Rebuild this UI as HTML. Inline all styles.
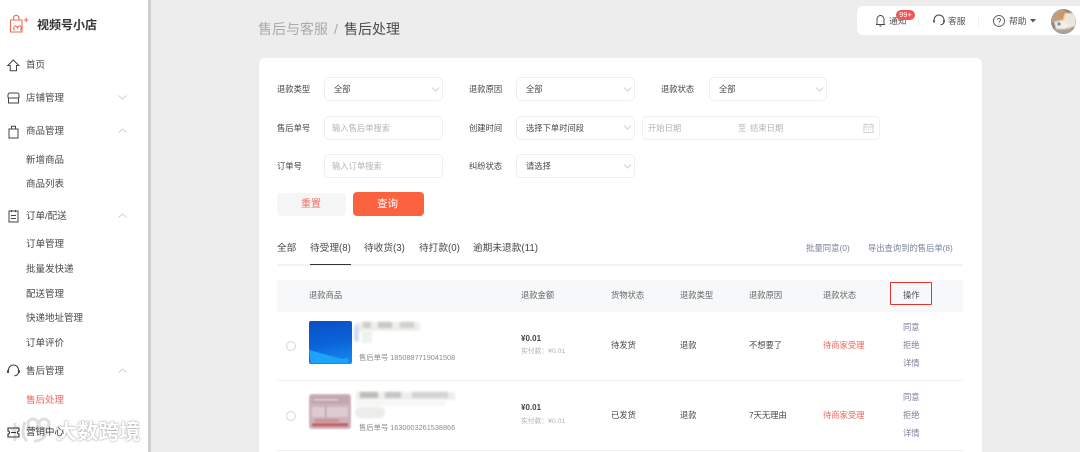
<!DOCTYPE html>
<html lang="zh-CN"><head><meta charset="utf-8"><title>售后处理</title>
<style>
*{box-sizing:border-box}
html,body{margin:0;padding:0;width:1080px;height:452px;overflow:hidden}
body{background:#ededed;font-family:"Liberation Sans","Noto Sans CJK SC",sans-serif;color:#333}
#w{position:absolute;left:0;top:0;width:1080px;height:452px;overflow:hidden;background:#ededed}
.t{position:absolute;white-space:nowrap;line-height:16px;height:16px;filter:blur(.3px)}
.b{position:absolute}
.s{position:absolute;background:#fff;border:1px solid #efefef;border-radius:5px;height:24px}
.chev{position:absolute;fill:none;stroke:#c4c4c4;stroke-width:.8}
.l{font-size:8.3px;color:#444}
.side{font-size:9.5px;color:#484848}
.v{font-size:8.3px;color:#484848}
.h{font-size:8.3px;color:#666}
.p{font-size:8.3px;color:#b5b5b5}
.a{font-size:8.3px;color:#7a8299}
.r{font-size:8.3px;color:#f0645a}
.tab{font-size:9.7px;color:#484848}
.top{font-size:8.8px;color:#555}
svg{position:absolute;overflow:visible}
</style></head><body><div id="w">

<div class="b" style="left:0;top:0;width:148px;height:452px;background:#fff"></div>
<div class="b" style="left:148px;top:0;width:3px;height:452px;background:#cfcfcf"></div>

<svg style="left:9px;top:14px" width="20" height="20" viewBox="0 0 20 20" fill="none" stroke="#ef6a5a" stroke-width="1.1"><path d="M1.500 6H13v12H1.500z"/><path d="M4.500 6V4a2.700 2.700 0 0 1 5.400 0v2"/><path d="M5.500 16.500c-2.500-5 2-6 3-2.500 1-3.500 5.500-2.500 3 2.500"/><path d="M15 6h4.500M17.200 3.800v4.400"/></svg>
<div class="t" style="left:37px;top:17px;font-size:12px;font-weight:700;color:#333">视频号小店</div>

<svg style="left:7px;top:59px" width="13" height="13" viewBox="0 0 13 13" fill="none" stroke="#444" stroke-width="1"><path d="M.8 6.500 6.300 1l5.500 5.500H9.500V11.800H3.200V6.500z"/></svg>
<div class="t side" style="left:26px;top:58px">首页</div>

<svg style="left:7px;top:92px" width="13" height="12" viewBox="0 0 13 12" fill="none" stroke="#444" stroke-width="1"><path d="M1 6V3a2 2 0 0 1 2-2h7a2 2 0 0 1 2 2v3M1 6h11M1.500 6v5h10V6"/></svg>
<div class="t side" style="left:26px;top:91px">店铺管理</div>
<svg class="chev" style="left:118px;top:95px" width="9" height="5"><path d="M.5.500 4.500 4l4-3.500"/></svg>

<svg style="left:8px;top:125px" width="11" height="14" viewBox="0 0 11 14" fill="none" stroke="#444" stroke-width="1"><path d="M1 4h9v9H1zM3.500 4V1.200h4V4"/></svg>
<div class="t side" style="left:26px;top:124px">商品管理</div>
<svg class="chev" style="left:118px;top:128px" width="9" height="5"><path d="M.5 4.500 4.500 1l4 3.500"/></svg>
<div class="t side" style="left:26px;top:153px">新增商品</div>
<div class="t side" style="left:26px;top:177px">商品列表</div>

<svg style="left:8px;top:209px" width="11" height="14" viewBox="0 0 11 14" fill="none" stroke="#444" stroke-width="1"><path d="M1 2h9v11H1zM3.500 1v2M7.500 1v2M3 6.500h5M3 9.500h5"/></svg>
<div class="t side" style="left:26px;top:209px">订单/配送</div>
<svg class="chev" style="left:118px;top:213px" width="9" height="5"><path d="M.5 4.500 4.500 1l4 3.500"/></svg>
<div class="t side" style="left:26px;top:237px">订单管理</div>
<div class="t side" style="left:26px;top:262px">批量发快递</div>
<div class="t side" style="left:26px;top:287px">配送管理</div>
<div class="t side" style="left:26px;top:311px">快递地址管理</div>
<div class="t side" style="left:26px;top:336px">订单评价</div>

<svg style="left:7px;top:364px" width="13" height="14" viewBox="0 0 13 14" fill="none" stroke="#444" stroke-width="1.100"><path d="M1.500 7.500V6a5 5 0 0 1 10 0v2c0 2.500-1.500 3.500-4 3.800"/><path d="M1 6v3M12 6v3" stroke-width="1.800"/></svg>
<div class="t side" style="left:26px;top:364px">售后管理</div>
<svg class="chev" style="left:118px;top:368px" width="9" height="5"><path d="M.5 4.500 4.500 1l4 3.500"/></svg>
<div class="t side" style="left:26px;top:393px;color:#f0645a">售后处理</div>

<svg style="left:10px;top:417px;opacity:.9" width="42" height="28" viewBox="0 0 42 28" fill="none" stroke="#dcdcdc" stroke-width="3"><path d="M5 6v18M1 13l8-3M15 5c-3 8-3 14 2 19"/><circle cx="23" cy="7" r="5"/><circle cx="34" cy="7" r="5"/><path d="M24 24c6 0 11-3 13-9"/></svg>
<div class="t" style="left:56px;top:420px;height:26px;line-height:26px;font-size:21px;letter-spacing:.1px;color:#fff;font-weight:700;text-shadow:0 0 2px #aaa,0 0 1px #999">大数跨境</div>
<svg style="left:7px;top:427px" width="13" height="11" viewBox="0 0 13 11" fill="none" stroke="#333" stroke-width="1.100"><path d="M1 1h11v3a1.500 1.500 0 0 0 0 3v3H1V7a1.500 1.500 0 0 0 0-3z"/><path d="M4 5.500h5"/></svg>
<div class="t side" style="left:26px;top:425px;color:#333">营销中心</div>

<div class="t" style="left:258px;top:20px;height:18px;line-height:18px;font-size:14px;color:#a9a9a9">售后与客服</div>
<div class="t" style="left:334px;top:20px;height:18px;line-height:18px;font-size:14px;color:#a9a9a9">/</div>
<div class="t" style="left:344px;top:20px;height:18px;line-height:18px;font-size:14px;color:#4a4a4a">售后处理</div>

<div class="b" style="left:857px;top:6px;width:223px;height:29px;background:#fff;border-radius:6px 0 0 6px"></div>
<svg style="left:875px;top:14px" width="11" height="13" viewBox="0 0 11 13" fill="none" stroke="#444" stroke-width=".9"><path d="M1 10.500h9M2 10.500V5a3.500 3.500 0 0 1 7 0v5.500M4.500 12h2"/></svg>
<div class="t top" style="left:889px;top:13px">通知</div>
<div class="b" style="left:896px;top:10px;width:19px;height:10px;border-radius:5px;background:#f0555a;color:#fff;font-size:7.500px;line-height:10px;text-align:center">99+</div>
<div class="b" style="left:918px;top:17px;width:1px;height:9px;background:#eee"></div>
<svg style="left:933px;top:14px" width="12" height="13" viewBox="0 0 12 13" fill="none" stroke="#444" stroke-width="1"><path d="M1 7V6a5 5 0 0 1 10 0v1.500c0 2-1.300 3-3.500 3.300"/><path d="M1 6v2.500M11 6v2.500" stroke-width="1.600"/></svg>
<div class="t top" style="left:948px;top:13px">客服</div>
<div class="b" style="left:978px;top:17px;width:1px;height:9px;background:#eee"></div>
<svg style="left:993px;top:15px" width="12" height="12" viewBox="0 0 12 12" fill="none" stroke="#444" stroke-width=".8"><circle cx="6" cy="6" r="5.500"/><path d="M4.500 4.800a1.500 1.500 0 1 1 2.300 1.300c-.6.400-.8.700-.8 1.400M6 8.700v.8"/></svg>
<div class="t top" style="left:1009px;top:13px">帮助</div>
<svg style="left:1030px;top:19px" width="6" height="4"><path d="M0 0h6L3 3.500z" fill="#555"/></svg>
<svg style="left:1051px;top:9px" width="25" height="25" viewBox="0 0 25 25"><defs><clipPath id="c"><circle cx="12.500" cy="12.500" r="12.500"/></clipPath><filter id="f"><feGaussianBlur stdDeviation=".8"/></filter></defs><g clip-path="url(#c)"><rect width="25" height="25" fill="#8e8478"/><g filter="url(#f)"><path d="M0 0h14L10 11 0 14z" fill="#b9a08c"/><path d="M5 6l9-4 4 5-6 5z" fill="#d9924f"/><path d="M14 4h11v13l-8 3-5-8z" fill="#ece5d8"/><path d="M3 13l8-2 8 5-6 6-8-2z" fill="#f4efe6"/><circle cx="8" cy="15" r="1.500" fill="#3c3530"/><path d="M0 20h25v5H0z" fill="#a8a29a"/></g></g></svg>

<div class="b" style="left:259px;top:58px;width:723px;height:394px;background:#fff;border-radius:6px 6px 0 0"></div>

<div class="t l" style="left:277px;top:81px">退款类型</div>
<div class="s" style="left:324px;top:77px;width:119px"></div><div class="t v" style="left:334px;top:81px">全部</div>
<svg class="chev" style="left:431px;top:87px" width="9" height="5"><path d="M1 .5 4.500 4 8 .5"/></svg>
<div class="t l" style="left:469px;top:81px">退款原因</div>
<div class="s" style="left:516px;top:77px;width:119px"></div><div class="t v" style="left:526px;top:81px">全部</div>
<svg class="chev" style="left:623px;top:87px" width="9" height="5"><path d="M1 .5 4.500 4 8 .5"/></svg>
<div class="t l" style="left:661px;top:81px">退款状态</div>
<div class="s" style="left:709px;top:77px;width:118px"></div><div class="t v" style="left:719px;top:81px">全部</div>
<svg class="chev" style="left:815px;top:87px" width="9" height="5"><path d="M1 .5 4.500 4 8 .5"/></svg>

<div class="t l" style="left:277px;top:120px">售后单号</div>
<div class="s" style="left:324px;top:116px;width:119px"></div><div class="t p" style="left:332px;top:120px">输入售后单搜索</div>
<div class="t l" style="left:469px;top:120px">创建时间</div>
<div class="s" style="left:516px;top:116px;width:119px"></div><div class="t v" style="left:526px;top:120px">选择下单时间段</div>
<svg class="chev" style="left:623px;top:125px" width="9" height="5"><path d="M1 .5 4.500 4 8 .5"/></svg>
<div class="s" style="left:642px;top:116px;width:238px"></div>
<div class="t p" style="left:648px;top:120px">开始日期</div>
<div class="t p" style="left:738px;top:120px">至</div>
<div class="t p" style="left:750px;top:120px">结束日期</div>
<svg style="left:863px;top:123px" width="11" height="10" viewBox="0 0 11 10" fill="none" stroke="#c4c4c4" stroke-width=".8"><path d="M1 1.500h9V9.500H1zM1 4h9M3 .5v2M8 .5v2M3 6.500h1M5 6.500h1M7 6.500h1"/></svg>

<div class="t l" style="left:277px;top:158px">订单号</div>
<div class="s" style="left:324px;top:154px;width:119px"></div><div class="t p" style="left:332px;top:158px">输入订单搜索</div>
<div class="t l" style="left:469px;top:158px">纠纷状态</div>
<div class="s" style="left:516px;top:154px;width:119px"></div><div class="t v" style="left:526px;top:158px">请选择</div>
<svg class="chev" style="left:623px;top:164px" width="9" height="5"><path d="M1 .5 4.500 4 8 .5"/></svg>

<div class="b" style="left:277px;top:193px;width:69px;height:23px;background:#f6f6f6;border-radius:4px"></div>
<div class="t" style="left:301px;top:197px;font-size:10px;color:#f0705f">重置</div>
<div class="b" style="left:353px;top:192px;width:71px;height:24px;background:#fb6340;border-radius:4px"></div>
<div class="t" style="left:377px;top:196px;font-size:10.500px;color:#fff">查询</div>

<div class="t tab" style="left:277px;top:241px">全部</div>
<div class="t tab" style="left:310px;top:241px">待受理(8)</div>
<div class="t tab" style="left:364px;top:241px">待收货(3)</div>
<div class="t tab" style="left:419px;top:241px">待打款(0)</div>
<div class="t tab" style="left:473px;top:241px">逾期未退款(11)</div>
<div class="b" style="left:277px;top:264px;width:686px;height:2px;background:#f3f3f3"></div>
<div class="b" style="left:310px;top:264px;width:41px;height:1px;background:#333"></div>
<div class="t" style="left:806px;top:240px;font-size:8.400px;color:#7a8299">批量同意(0)</div>
<div class="t" style="left:868px;top:240px;font-size:8.300px;color:#7a8299">导出查询到的售后单(8)</div>

<div class="b" style="left:277px;top:280px;width:686px;height:32px;background:#f7f8f9"></div>
<div class="t h" style="left:309px;top:287px">退款商品</div>
<div class="t h" style="left:521px;top:287px">退款金额</div>
<div class="t h" style="left:611px;top:287px">货物状态</div>
<div class="t h" style="left:680px;top:287px">退款类型</div>
<div class="t h" style="left:749px;top:287px">退款原因</div>
<div class="t h" style="left:823px;top:287px">退款状态</div>
<div class="t h" style="left:903px;top:287px;color:#555">操作</div>
<div class="b" style="left:890px;top:282px;width:42px;height:23px;border:1.500px solid #e1342c;border-radius:1px"></div>

<div class="b" style="left:286px;top:341px;width:10px;height:10px;border:1px solid #d5d5d5;border-radius:50%"></div>
<div class="b" style="left:309px;top:321px;width:43px;height:43px;border-radius:2px;background:linear-gradient(170deg,#0a4fc4 0%,#0c62d8 50%,#1590f0 100%)"></div>
<svg style="left:309px;top:321px" width="43" height="43"><path d="M0 29l33 9 6-1v5H2z" fill="#1ba4fa"/></svg>
<div class="b" style="left:355px;top:322px;width:65px;height:9px;background:#eeeeea;border-radius:3px;filter:blur(1px)"></div>
<div class="b" style="left:363px;top:322px;width:8px;height:6px;background:#cfcfca;filter:blur(1px)"></div>
<div class="b" style="left:378px;top:322px;width:14px;height:6px;background:#c9c9c2;filter:blur(1px)"></div>
<div class="b" style="left:400px;top:322px;width:14px;height:6px;background:#d2d2cc;filter:blur(1px)"></div>
<div class="b" style="left:354px;top:325px;width:5px;height:17px;background:#cfdcf4;border-radius:3px;filter:blur(1px)"></div>
<div class="b" style="left:362px;top:331px;width:10px;height:12px;background:#f0f0ee;filter:blur(1px)"></div>
<div class="t" style="left:359px;top:350px;font-size:7.300px;color:#8b8b8b">售后单号 1850887719041508</div>
<div class="t" style="left:521px;top:331px;font-size:8px;color:#444;font-weight:700">¥0.01</div>
<div class="t" style="left:521px;top:344px;font-size:6.800px;color:#b0b0b0">实付款：¥0.01</div>
<div class="t v" style="left:611px;top:337px">待发货</div>
<div class="t v" style="left:680px;top:337px">退款</div>
<div class="t v" style="left:749px;top:337px">不想要了</div>
<div class="t r" style="left:823px;top:337px">待商家受理</div>
<div class="t a" style="left:903px;top:319px">同意</div>
<div class="t a" style="left:903px;top:337px">拒绝</div>
<div class="t a" style="left:903px;top:355px">详情</div>
<div class="b" style="left:277px;top:380px;width:686px;height:1px;background:#f0f0f0"></div>

<div class="b" style="left:286px;top:411px;width:10px;height:10px;border:1px solid #d5d5d5;border-radius:50%"></div>
<svg style="left:309px;top:394px" width="42" height="35" viewBox="0 0 42 35"><defs><filter id="g"><feGaussianBlur stdDeviation=".9"/></filter></defs><g filter="url(#g)"><rect width="42" height="35" rx="3" fill="#cdb2bb"/><rect x="2" y="2" width="38" height="8" fill="#c2a6b0"/><rect x="5" y="5" width="24" height="1.500" fill="#dfd0d5"/><rect x="3" y="13" width="36" height="10" fill="#dccbd0"/><rect x="16" y="12" width="1.500" height="12" fill="#bfa2ac"/><rect x="6" y="25" width="24" height="3" fill="#cf8f94"/><rect x="3" y="29" width="36" height="3.500" fill="#c8626a"/></g></svg>
<div class="b" style="left:356px;top:392px;width:99px;height:8px;background:#eeeeec;filter:blur(1px)"></div>
<div class="b" style="left:360px;top:392px;width:18px;height:6px;background:#bdbdb8;filter:blur(1px)"></div>
<div class="b" style="left:385px;top:392px;width:16px;height:6px;background:#c3c8c3;filter:blur(1px)"></div>
<div class="b" style="left:412px;top:392px;width:36px;height:6px;background:#d4d4d2;filter:blur(1px)"></div>
<div class="b" style="left:356px;top:400px;width:90px;height:6px;background:#f6f6f5;filter:blur(1px)"></div>
<div class="b" style="left:355px;top:407px;width:30px;height:11px;background:#ececea;border-radius:5px;filter:blur(1px)"></div>
<div class="t" style="left:359px;top:420px;font-size:7.300px;color:#8b8b8b">售后单号 1630003261538866</div>
<div class="t" style="left:521px;top:400px;font-size:8px;color:#444;font-weight:700">¥0.01</div>
<div class="t" style="left:521px;top:414px;font-size:6.800px;color:#b0b0b0">实付款：¥0.01</div>
<div class="t v" style="left:611px;top:407px">已发货</div>
<div class="t v" style="left:680px;top:407px">退款</div>
<div class="t v" style="left:749px;top:407px">7天无理由</div>
<div class="t r" style="left:823px;top:407px">待商家受理</div>
<div class="t a" style="left:903px;top:389px">同意</div>
<div class="t a" style="left:903px;top:407px">拒绝</div>
<div class="t a" style="left:903px;top:425px">详情</div>
<div class="b" style="left:277px;top:450px;width:686px;height:1px;background:#f0f0f0"></div>

</div></body></html>
